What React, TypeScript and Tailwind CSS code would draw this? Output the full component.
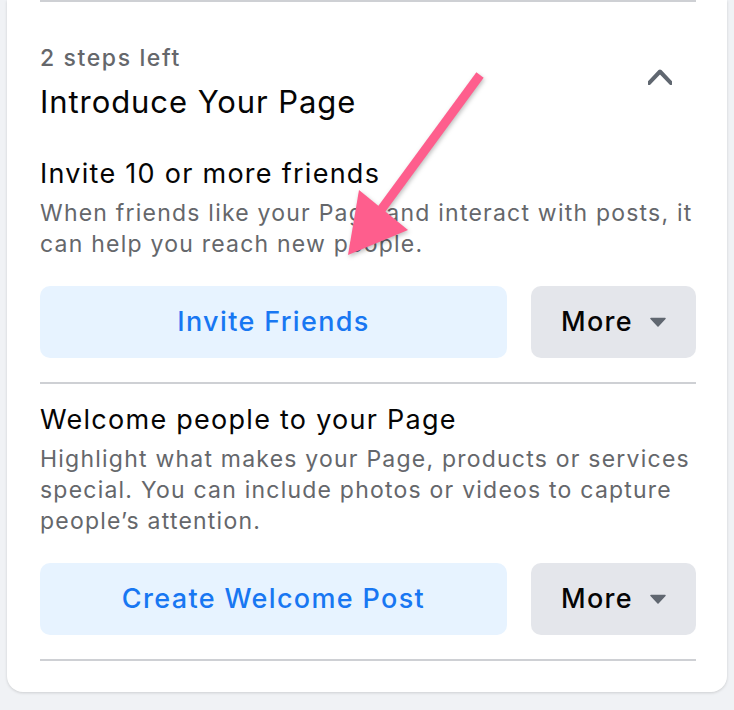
import React from 'react';

const font = { fontFamily: 'Inter, "Noto Sans", sans-serif' };

const Caret = () => (
  <svg width="16" height="10" viewBox="0 0 16 10" className="ml-[17px]">
    <path d="M1 1.5 L15 1.5 L8 9 Z" fill="#606770" stroke="#606770" strokeWidth="1.5" strokeLinejoin="round" />
  </svg>
);

const Step = ({ title, text, action }: { title: string; text: string; action: string }) => (
  <div>
    <div className="text-[27px] leading-[32px] tracking-[0.047em] text-[#050505]">{title}</div>
    <p className="mt-[8px] text-[23px] leading-[31px] tracking-[0.053em] text-[#65676b]">{text}</p>
    <div className="mt-[26px] flex gap-[24px]">
      <button className="h-[72px] flex-1 rounded-[10px] bg-[#e7f3ff] text-[27px] font-medium tracking-[0.05em] text-[#1877f2]">
        {action}
      </button>
      <button className="flex h-[72px] w-[165px] items-center justify-center rounded-[10px] bg-[#e4e6eb] text-[27px] font-medium tracking-[0.05em] text-[#050505]">
        More
        <Caret />
      </button>
    </div>
  </div>
);

const App = () => {
  return (
    <div className="min-h-screen w-full bg-[#f0f2f5] px-[7px] pb-[17px]" style={font}>
      <div className="relative rounded-b-[16px] bg-white pl-[33px] pr-[31px] pb-[31px] shadow-[0_1px_3px_rgba(0,0,0,0.15)]">
        <div className="h-[2px] bg-[#ced0d4]" />

        <div className="mt-[42px] flex items-start justify-between">
          <div>
            <div className="text-[23px] font-medium leading-[28px] tracking-[0.07em] text-[#65676b]">2 steps left</div>
            <div className="mt-[12px] text-[31px] leading-[36px] tracking-[0.03em] text-[#050505]">Introduce Your Page</div>
          </div>
          <svg width="24" height="24" viewBox="0 0 24 24" className="mt-[21px] mr-[24px]">
            <polyline points="1,18 12,6.5 23,18" fill="none" stroke="#606770" strokeWidth="4" strokeLinecap="round" strokeLinejoin="round" />
          </svg>
        </div>

        <div className="mt-[38px]">
          <Step
            title="Invite 10 or more friends"
            text="When friends like your Page and interact with posts, it can help you reach new people."
            action="Invite Friends"
          />
        </div>

        <div className="mt-[24px] h-[2px] bg-[#ced0d4]" />

        <div className="mt-[20px]">
          <Step
            title="Welcome people to your Page"
            text="Highlight what makes your Page, products or services special. You can include photos or videos to capture people’s attention."
            action="Create Welcome Post"
          />
        </div>

        <div className="mt-[24px] h-[2px] bg-[#ced0d4]" />

        {/* annotation arrow drawn over the card */}
        <svg
          className="pointer-events-none absolute left-[-7px] top-0"
          width="734"
          height="300"
          viewBox="0 0 734 300"
          style={{ filter: 'drop-shadow(1px 2px 2px rgba(0,0,0,0.25))' }}
        >
          <line x1="480" y1="75" x2="378" y2="214" stroke="#fe5e8d" strokeWidth="9" />
          <polygon points="348,255 359,190 408,230" fill="#fe5e8d" />
        </svg>
      </div>
    </div>
  );
};

export default App;
